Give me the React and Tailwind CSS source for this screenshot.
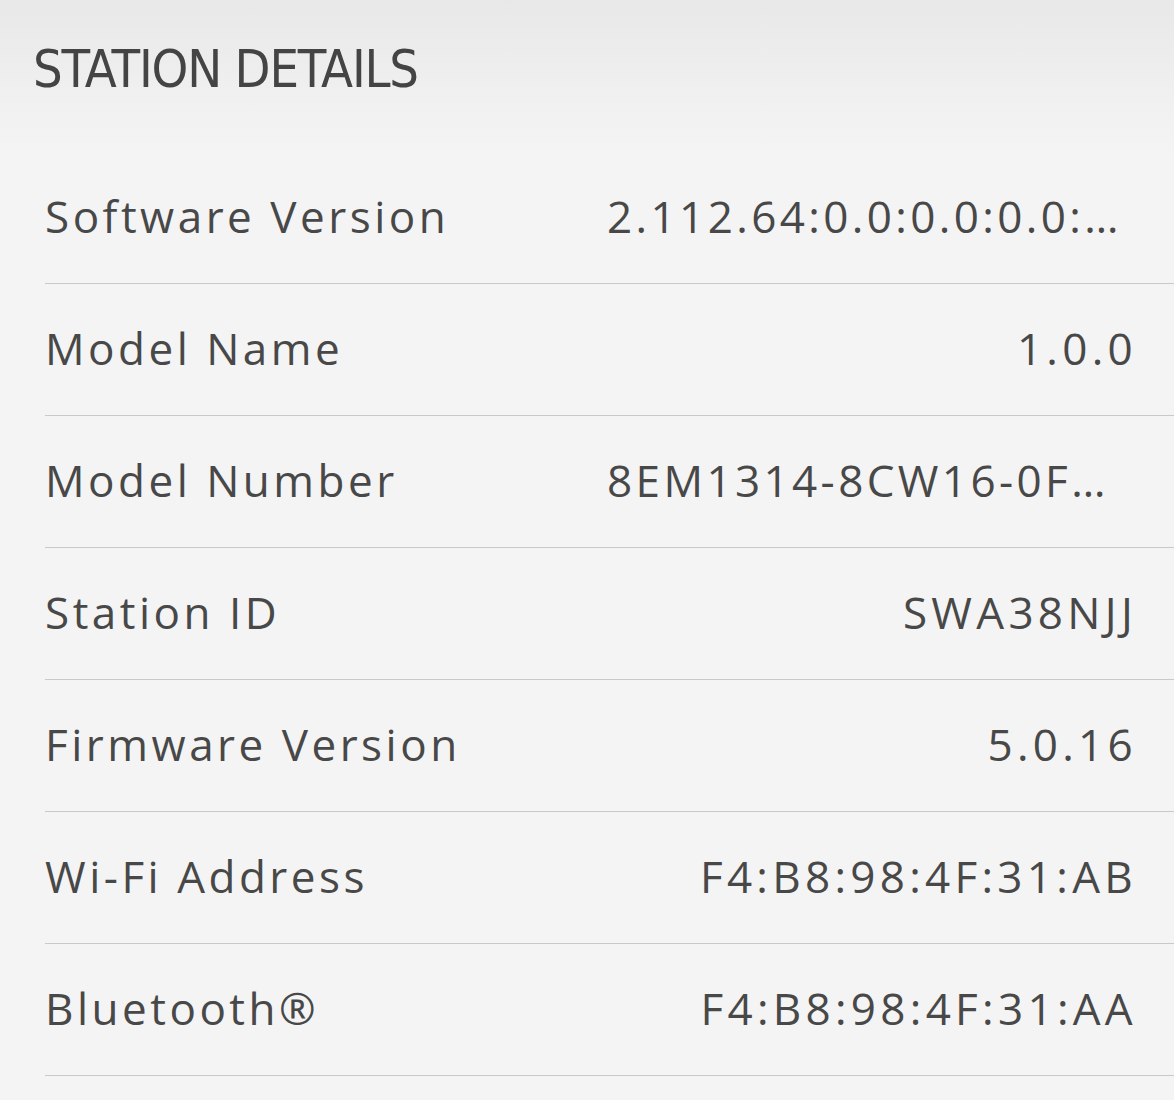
import React from "react";

const rows = [
  { label: "Software Version", value: "2.112.64:0.0:0.0:0.0:…", cut: true },
  { label: "Model Name", value: "1.0.0" },
  { label: "Model Number", value: "8EM1314-8CW16-0F…", cut: true },
  { label: "Station ID", value: "SWA38NJJ" },
  { label: "Firmware Version", value: "5.0.16" },
  { label: "Wi-Fi Address", value: "F4:B8:98:4F:31:AB" },
  { label: "Bluetooth®", value: "F4:B8:98:4F:31:AA" },
];

export default function App() {
  return (
    <div className="w-[1174px] h-[1100px] overflow-hidden bg-[#f4f4f4] text-[#484848]">
      <div className="h-[152px] bg-gradient-to-b from-[#e8e8e8] via-[#f2f2f2] via-80% to-[#f4f4f4] pl-[33px] pt-[37px]">
        <h1
          className="text-[52px] leading-[64px] tracking-[-1.2px] text-[#444]"
          style={{ fontFamily: '"DejaVu Sans Condensed", "Liberation Sans Narrow", Roboto, sans-serif' }}
        >
          STATION DETAILS
        </h1>
      </div>
      <div className="pl-[45px]">
        {rows.map((r) => (
          <div
            key={r.label}
            className="flex h-[132px] items-center border-b border-[#c9c9c9] pr-[37px] pb-[4px]"
            style={{ fontFamily: '"Open Sans", sans-serif' }}
          >
            <div className="flex-1 text-[44px] tracking-[3.5px]">{r.label}</div>
            <div
              className={
                "w-[530px] whitespace-nowrap text-[44px] " +
                (r.cut ? "text-left tracking-[3.4px]" : "text-right tracking-[4.3px]")
              }
            >
              {r.value}
            </div>
          </div>
        ))}
      </div>
    </div>
  );
}
